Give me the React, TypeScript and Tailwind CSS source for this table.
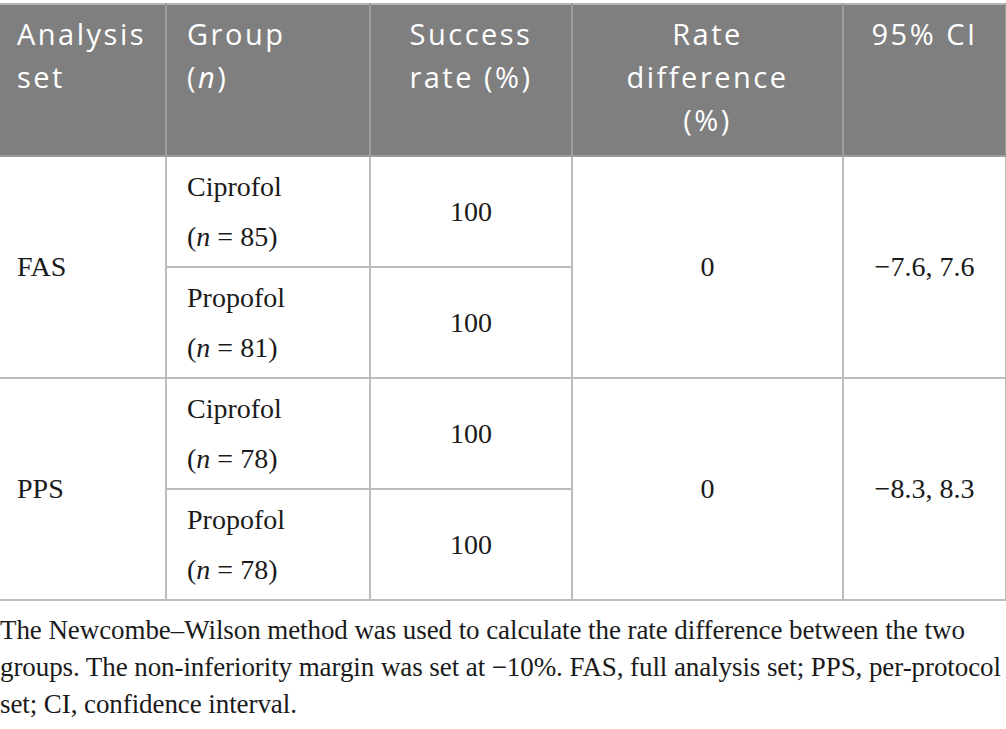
import React from 'react';

const serif = "font-['Liberation_Serif','Times_New_Roman',serif]";
const sans = "font-['Open_Sans','DejaVu_Sans',sans-serif]";

interface GroupRow {
  name: string;
  n: number;
  rate: string;
}

interface SetBlock {
  label: string;
  groups: GroupRow[];
  diff: string;
  ci: string;
}

const sets: SetBlock[] = [
  {
    label: 'FAS',
    groups: [
      { name: 'Ciprofol', n: 85, rate: '100' },
      { name: 'Propofol', n: 81, rate: '100' },
    ],
    diff: '0',
    ci: '\u22127.6, 7.6',
  },
  {
    label: 'PPS',
    groups: [
      { name: 'Ciprofol', n: 78, rate: '100' },
      { name: 'Propofol', n: 78, rate: '100' },
    ],
    diff: '0',
    ci: '\u22128.3, 8.3',
  },
];

const cell = 'border-2 border-[#bcbcbc] align-middle';
const head = 'border-2 border-[#9c9c9c] align-top pt-[7px] font-normal';

export default function App() {
  return (
    <div className="w-[1006px] h-[729px] bg-white overflow-hidden pt-[3px]">
      <table className="table-fixed border-collapse w-[1006px] text-[#1a1a1a]">
        <colgroup>
          <col className="w-[166px]" />
          <col className="w-[204px]" />
          <col className="w-[202px]" />
          <col className="w-[271px]" />
          <col className="w-[163px]" />
        </colgroup>
        <thead>
          <tr className={`h-[152px] bg-[#7f7f7f] text-white text-[29px] leading-[43px] tracking-[2.5px] ${sans}`}>
            <th className={`${head} text-left pl-[17px] border-l-0 border-t-[#b5b5b5]`}>
              Analysis
              <br />
              set
            </th>
            <th className={`${head} text-left pl-[20px] border-t-[#b5b5b5]`}>
              Group
              <br />(<span className="italic">n</span>)
            </th>
            <th className={`${head} text-center border-t-[#b5b5b5]`}>
              Success
              <br />
              rate (%)
            </th>
            <th className={`${head} text-center border-t-[#b5b5b5]`}>
              Rate
              <br />
              difference
              <br />
              (%)
            </th>
            <th className={`${head} text-center border-t-[#b5b5b5]`}>95% CI</th>
          </tr>
        </thead>
        <tbody className={`${serif} text-[28px]`}>
          {sets.map((s) =>
            s.groups.map((g, i) => (
              <tr key={s.label + g.name} className="h-[111px]">
                {i === 0 && (
                  <td rowSpan={2} className={`${cell} border-l-0 pl-[17px]`}>
                    {s.label}
                  </td>
                )}
                <td className={`${cell} pl-[20px] leading-[50px]`}>
                  {g.name}
                  <br />(<span className="italic">n</span> = {g.n})
                </td>
                <td className={`${cell} text-center`}>{g.rate}</td>
                {i === 0 && (
                  <>
                    <td rowSpan={2} className={`${cell} text-center`}>
                      {s.diff}
                    </td>
                    <td rowSpan={2} className={`${cell} text-center`}>
                      {s.ci}
                    </td>
                  </>
                )}
              </tr>
            ))
          )}
        </tbody>
      </table>
      <p className={`${serif} mt-[11px] text-[27px] leading-[37px] tracking-[-0.08px] text-[#1a1a1a] whitespace-nowrap`}>
        The Newcombe–Wilson method was used to calculate the rate difference between the two
        <br />
        groups. The non-inferiority margin was set at −10%. FAS, full analysis set; PPS, per-protocol
        <br />
        set; CI, confidence interval.
      </p>
    </div>
  );
}
